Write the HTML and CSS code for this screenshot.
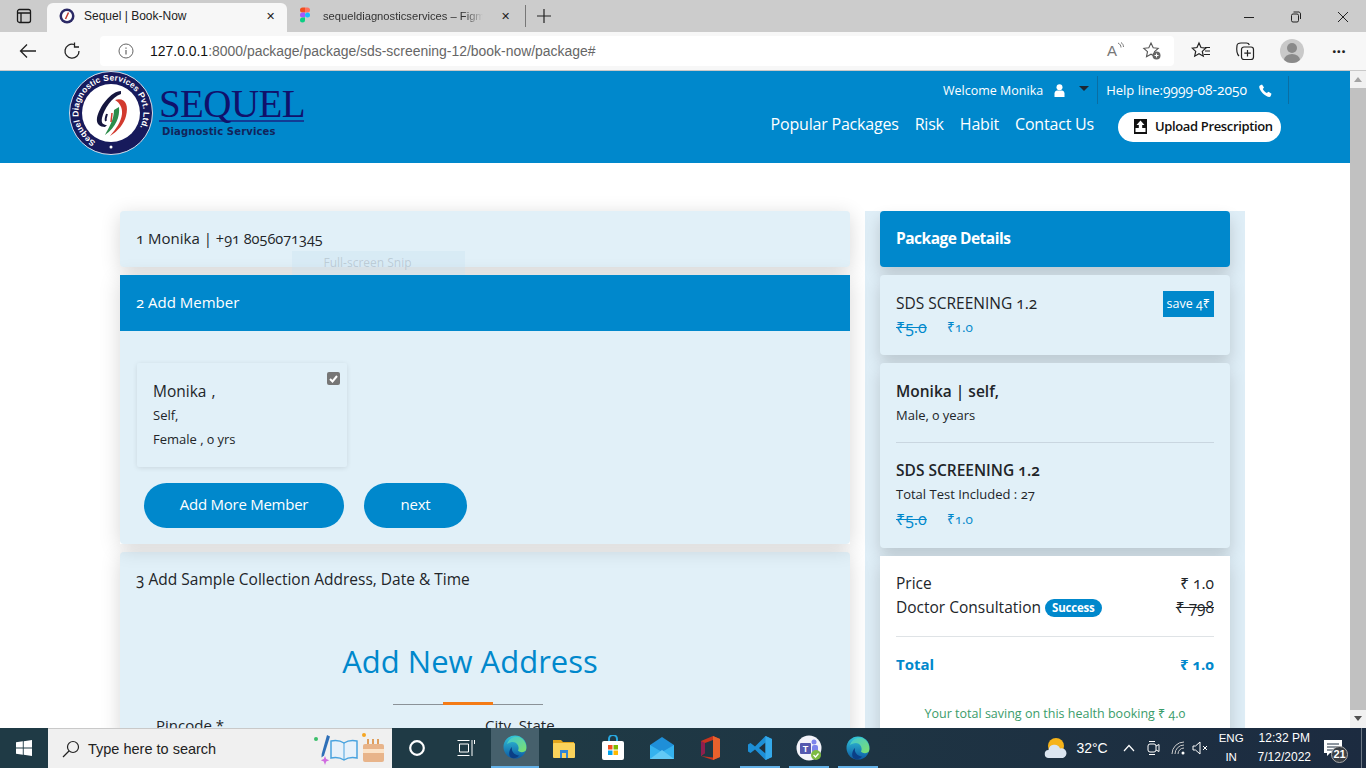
FILE: index.html
```html
<!DOCTYPE html>
<html lang="en">
<head>
    <meta charset="UTF-8">
    <meta name="viewport" content="width=device-width, initial-scale=1.0">
    <title>Sequel | Book-Now</title>
    <link rel="stylesheet" href="styles.css">
</head>
<body>

<!-- Browser tabs -->
<div class="tabbar">
    <svg class="tab-panel-icon" width="16" height="16" viewBox="0 0 16 16" fill="none" stroke="#1a1a1a" stroke-width="1.3"><rect x="1.5" y="1.5" width="13" height="13" rx="2"/><path d="M1.5 5h13M5 5v9.5" /></svg>
    <div class="tab tab-active">
        <svg width="16" height="16" viewBox="0 0 16 16"><circle cx="8" cy="8" r="7.5" fill="#2c2a66"/><circle cx="8" cy="8" r="5" fill="#fff"/><path d="M9.5 4.5 6.5 11" stroke="#c0392b" stroke-width="1.5"/></svg>
        <span class="tab-title">Sequel | Book-Now</span>
        <span class="tab-close">✕</span>
    </div>
    <div class="tab">
        <svg width="12" height="18" viewBox="0 0 12 18"><path d="M1 3a2.5 2.5 0 0 1 2.5-2.5H6v5H3.500A2.500 2.500 0 0 1 1 3z" fill="#f24e1e"/><path d="M6 .5h2.500a2.500 2.500 0 0 1 0 5H6z" fill="#ff7262"/><path d="M1 8a2.500 2.500 0 0 1 2.500-2.500H6v5H3.500A2.500 2.500 0 0 1 1 8z" fill="#a259ff"/><circle cx="8.500" cy="8" r="2.500" fill="#1abcfe"/><path d="M1 13a2.500 2.500 0 0 1 2.500-2.500H6V13a2.500 2.500 0 0 1-5 0z" fill="#0acf83"/></svg>
        <span class="tab-title tab-fade">sequeldiagnosticservices – Figma</span>
        <span class="tab-close">✕</span>
    </div>
    <span class="tab-sep"></span>
    <svg class="tab-plus" width="16" height="16" viewBox="0 0 16 16" stroke="#222" stroke-width="1.2"><path d="M8 1v14M1 8h14"/></svg>
    <div class="win-controls">
        <svg width="12" height="12" viewBox="0 0 12 12" stroke="#222"><path d="M1 6.500h10"/></svg>
        <svg width="12" height="12" viewBox="0 0 12 12" stroke="#222" fill="none"><rect x="1.500" y="3" width="7" height="8" rx="1.500"/><path d="M3.500 1h4.500A2 2 0 0 1 10.500 3v5"/></svg>
        <svg width="12" height="12" viewBox="0 0 12 12" stroke="#222"><path d="M1 1l10 10M11 1 1 11"/></svg>
    </div>
</div>

<!-- Browser toolbar -->
<div class="toolbar">
    <svg class="tool-back" width="18" height="16" viewBox="0 0 18 16" fill="none" stroke="#222" stroke-width="1.3"><path d="M17 8H1.500M8 1.500 1.500 8 8 14.500"/></svg>
    <svg class="tool-reload" width="18" height="18" viewBox="0 0 18 18" fill="none" stroke="#222" stroke-width="1.3"><path d="M11 2.500A7 7 0 1 0 16 9"/><path d="M11.500 .5v4.500H16"/></svg>
    <div class="addressbar">
        <svg width="16" height="16" viewBox="0 0 16 16" fill="none" stroke="#666"><circle cx="8" cy="8" r="7"/><path d="M8 7v4.500M8 4.500v1.200" stroke-width="1.200"/></svg>
        <span class="url"><b>127.0.0.1</b>:8000/package/package/sds-screening-12/book-now/package#</span>
        <span class="read-aloud">A<svg width="7" height="10" viewBox="0 0 7 10" fill="none" stroke="#777"><path d="M1 1c2 1 3 2.500 3 4.500M4 .5c1.500 1 2.500 2.500 2.500 4.500"/></svg></span>
        <svg class="fav-add" width="20" height="20" viewBox="0 0 20 20" fill="none" stroke="#555" stroke-width="1.100"><path d="M9 2l2.200 4.700 5 .6-3.700 3.400 1 5L9 13.200l-4.500 2.500 1-5L1.800 7.300l5-.6z"/><circle cx="14.500" cy="14.500" r="4" fill="#666" stroke="none"/><path d="M14.500 12.500v4M12.500 14.500h4" stroke="#fff"/></svg>
    </div>
    <svg class="tool-icon tool-favs" width="20" height="20" viewBox="0 0 20 20" fill="none" stroke="#222" stroke-width="1.200"><path d="M8 2l2 4.500 4.800.6-3.500 3.300 1 4.800L8 12.800l-4.300 2.400 1-4.800L1.200 7.100 6 6.500zM14 6.500h5M14 10h5M13 13.500h6"/></svg>
    <svg class="tool-icon tool-coll" width="20" height="20" viewBox="0 0 20 20" fill="none" stroke="#222" stroke-width="1.200"><path d="M4 15C2 13 1.500 8 2 4.500 2.300 2.500 4 2 6 2h5.500c1.500 0 2.500.7 2.800 2"/><rect x="6.500" y="6" width="12" height="12.500" rx="2.500"/><path d="M12.500 9v6.500M9.300 12.200h6.500"/></svg>
    <span class="avatar"><svg width="22" height="24" viewBox="0 0 22 24" fill="#8a8a8a"><circle cx="11" cy="9" r="5"/><ellipse cx="11" cy="21" rx="8" ry="6"/></svg></span>
    <span class="tool-dots">···</span>
</div>

<div class="viewport">
    <div class="site">

        <header class="site-header">
            <div class="logo">
                <svg width="84" height="84" viewBox="0 0 84 84">
                    <circle cx="42" cy="42" r="41.500" fill="#171a5c" stroke="#d6dbe8"/>
                    <circle cx="42" cy="42" r="29" fill="#fff"/>
                    <defs><path id="logo-ring" d="M42 42m-32.500 0a32.500 32.500 0 1 1 65 0a32.500 32.500 0 1 1-65 0"/></defs>
                    <text class="logo-ring-text" transform="rotate(-62 42 42)"><textPath href="#logo-ring" textLength="152" lengthAdjust="spacing">Sequel Diagnostic Services Pvt. Ltd.</textPath></text>
                    <circle cx="42" cy="76" r="1.500" fill="#fff"/>
                    <path d="M52 20C42 20 30 36 28 47c-1 6 3 9 8 9l2-2c-4 0-6-2-5-7 2-9 10-21 19-24z" fill="#15163e"/>
                    <path d="M38 43c-1 3-2 5-1 7" fill="none" stroke="#15163e" stroke-width="2"/>
                    <path d="M46 29c10-3 14 5 11 16-2 8-8 15-16 20 6-7 11-14 12-22 .7-6-2-11-7-14z" fill="#d23a2e"/>
                    <path d="M50 36c1 10-3 20-14 28 4-8 9-15 9-25z" fill="#2c8c4a"/>
                    <path d="M43 42l-1 9" stroke="#d23a2e" stroke-width="1.500"/>
                </svg>
                <div class="logo-text">
                    <div class="logo-name">SEQUEL</div>
                    <div class="logo-sub">Diagnostic Services</div>
                </div>
            </div>
            <div class="header-right">
                <div class="header-top">
                    <span class="welcome">Welcome Monika</span>
                    <svg width="11" height="13" viewBox="0 0 11 13" fill="#fff"><circle cx="5.500" cy="3.200" r="3"/><path d="M.5 13V9.500C.5 7.500 2 6.500 3 6.500h5c1 0 2.500 1 2.500 3V13z"/></svg>
                    <span class="caret"></span>
                    <span class="help">Help line:<span class="help-num">9999-08-2050</span></span>
                    <svg width="13" height="13" viewBox="0 0 13 13" fill="#fff"><path d="M3 .5 5 3.500 3.800 5c.8 1.800 2.200 3.200 4 4L9.500 7.800l3 2-.9 2.400c-.3.500-1 .8-1.600.7C5.500 12 1 7.500.2 3c-.1-.6.200-1.300.7-1.600z"/></svg>
                </div>
                <nav class="header-nav">
                    <a>Popular Packages</a>
                    <a>Risk</a>
                    <a>Habit</a>
                    <a>Contact Us</a>
                    <button class="upload-btn">
                        <svg width="13" height="15" viewBox="0 0 13 15"><rect width="13" height="15" fill="#111"/><rect x="1.500" y="9" width="10" height="4" fill="#fff"/><path d="M6.500 1.500 10.500 6H8.200v5H4.800V6H2.500z" fill="#fff"/></svg>
                        <span>Upload Prescription</span>
                    </button>
                </nav>
            </div>
        </header>

        <main class="booking">
            <section class="steps">
                <div class="step-card step-closed">
                    <span class="num">1</span> Monika | <span class="num phone">+91 8056071345</span>
                </div>
                <div class="step-open">
                    <div class="step-head"><span class="num">2</span> Add Member</div>
                    <div class="step-body">
                        <div class="member-card">
                            <span class="member-check"><svg width="9" height="8" viewBox="0 0 9 8" fill="none" stroke="#fff" stroke-width="2"><path d="M1 4l2.500 2.500L8 1"/></svg></span>
                            <div class="member-name">Monika ,</div>
                            <div class="member-line">Self,</div>
                            <div class="member-line">Female , <span class="num">0</span> yrs</div>
                        </div>
                        <div class="member-actions">
                            <button class="pill pill-wide">Add More Member</button>
                            <button class="pill pill-next">next</button>
                        </div>
                    </div>
                </div>
                <div class="step-address">
                    <div class="address-title"><span class="num">3</span> Add Sample Collection Address, Date &amp; Time</div>
                    <h2 class="address-heading">Add New Address</h2>
                    <div class="heading-rule"><span></span></div>
                    <div class="address-fields">
                        <label>Pincode *</label>
                        <label>City, State</label>
                    </div>
                </div>
                <div class="snip-ghost">Full-screen Snip</div>
            </section>

            <aside class="summary">
                <div class="summary-head">Package Details</div>
                <div class="summary-card package-card">
                    <div>
                        <div class="package-name">SDS SCREENING <span class="num">1.2</span></div>
                        <div class="prices"><s class="num">₹5.0</s><span class="num">₹1.0</span></div>
                    </div>
                    <span class="save-tag">save <span class="num">4₹</span></span>
                </div>
                <div class="summary-card person-card">
                    <div class="person-name">Monika | self,</div>
                    <div class="person-line">Male, <span class="num">0</span> years</div>
                    <hr class="rule">
                    <div class="person-name">SDS SCREENING <span class="num">1.2</span></div>
                    <div class="person-line">Total Test Included : <span class="num">27</span></div>
                    <div class="prices prices-b"><s class="num">₹5.0</s><span class="num">₹1.0</span></div>
                </div>
                <div class="bill-card">
                    <div class="bill-row"><span>Price</span><span class="num">₹ 1.0</span></div>
                    <div class="bill-row"><span>Doctor Consultation <em class="badge">Success</em></span><s class="num">₹ 798</s></div>
                    <hr class="bill-rule">
                    <div class="bill-row bill-total"><span>Total</span><span class="num">₹ 1.0</span></div>
                    <p class="bill-saving">Your total saving on this health booking ₹ <span class="num">4.0</span></p>
                </div>
            </aside>
        </main>
    </div>

    <div class="scrollbar">
        <span class="arrow-up"></span>
        <span class="thumb"></span>
        <span class="arrow-down"></span>
    </div>
</div>

<!-- Windows taskbar -->
<footer class="taskbar">
    <div class="task-start">
        <svg width="16" height="16" viewBox="0 0 16 16" fill="#fff"><path d="M0 2.300 6.800 1.300v6.300H0zM7.700 1.200 16 0v7.600H7.700zM0 8.400h6.800v6.300L0 13.700zM7.700 8.400H16V16L7.700 14.800z"/></svg>
    </div>
    <div class="task-search">
        <svg width="18" height="18" viewBox="0 0 18 18" fill="none" stroke="#222" stroke-width="1.200"><circle cx="11" cy="7" r="5.500"/><path d="M7 11 1 17"/></svg>
        <span>Type here to search</span>
        <svg class="search-art" width="76" height="34" viewBox="0 0 76 34">
            <circle cx="3" cy="7" r="2" fill="#3bbf6a"/>
            <path d="M14 3l3 1.500-6 19-2.500 2 .2-3.500z" fill="#2e6fb7"/>
            <path d="M12 24l1.200 3 3 1.200-3 1.200-1.200 3.600-1.200-3.600-3-1.200 3-1.200z" fill="#d06be0"/>
            <path d="M18 9c5-1 10 0 13 2 3-2 8-3 13-2v17c-5-1-10 0-13 2-3-2-8-3-13-2z" fill="#e8f1fa" stroke="#4aa3df" stroke-width="1.500"/>
            <path d="M31 11v17" stroke="#4aa3df"/>
            <circle cx="51" cy="3" r="2" fill="#f5a623"/>
            <rect x="50" y="12" width="21" height="18" rx="2" fill="#e8b48a"/>
            <rect x="50" y="17" width="21" height="4" fill="#fbe3c8"/>
            <path d="M55 12V7M60 12V7M65 12V7" stroke="#d9822b" stroke-width="1.500"/>
        </svg>
    </div>
    <div class="task-icons">
        <span class="task-item"><svg width="18" height="18" viewBox="0 0 18 18" fill="none" stroke="#fff" stroke-width="2.200"><circle cx="9" cy="9" r="6.800"/></svg></span>
        <span class="task-item"><svg width="18" height="18" viewBox="0 0 18 18" fill="none" stroke="#fff"><path d="M.5 1.500h12M.5 16.500h12M2.500 5h9v8h-9zM15 1v16M17.500 1v4"/></svg></span>
        <span class="task-item task-current"><svg width="24" height="24" viewBox="0 0 24 24"><use href="#edge-mark"/></svg></span>
        <span class="task-item"><svg width="22" height="20" viewBox="0 0 22 20"><path d="M0 2h8l2 2h11v3H0z" fill="#e3a51c"/><rect y="5" width="22" height="15" rx="1" fill="#fbd35b"/><rect x="7" y="12" width="8" height="8" fill="#2f86d6"/><rect x="9" y="15" width="4" height="5" fill="#fbd35b"/></svg></span>
        <span class="task-item"><svg width="24" height="26" viewBox="0 0 24 26"><path d="M8 7V4a4 4 0 0 1 8 0v3" fill="none" stroke="#28a8e0" stroke-width="2"/><rect x="1" y="6" width="22" height="19" rx="2" fill="#fff"/><rect x="7" y="10" width="4.500" height="4.500" fill="#f25022"/><rect x="12.500" y="10" width="4.500" height="4.500" fill="#7fba00"/><rect x="7" y="15.500" width="4.500" height="4.500" fill="#00a4ef"/><rect x="12.500" y="15.500" width="4.500" height="4.500" fill="#ffb900"/></svg></span>
        <span class="task-item"><svg width="24" height="22" viewBox="0 0 24 22"><path d="M12 0 24 8v14H0V8z" fill="#1f8fd8"/><path d="M0 8l12 7L24 8v14H0z" fill="#35b2ee"/><path d="M0 22l12-9 12 9z" fill="#62c9f5"/></svg></span>
        <span class="task-item"><svg width="20" height="24" viewBox="0 0 20 24"><path d="M0 5 12 0l7 3v18l-7 3-12-4 12 1.500V4L4 7v10l-4 3z" fill="#c8341e"/><path d="M12 0l7 3v18l-7 3z" fill="#e8612c"/><path d="M0 5 4 7v10l-4 3z" fill="#8e1f4e"/></svg></span>
        <span class="task-item task-open"><svg width="24" height="24" viewBox="0 0 24 24"><path d="M17.500 0 24 3v18l-6.500 3L7 13.500 2.500 17 0 15.500V8.500L2.500 7 7 10.500z" fill="#1d8fd6"/><path d="M17.500 6.500 11 12l6.500 5.500z" fill="#1f2f3b"/><path d="M17.500 0 24 3v18l-6.500 3z" fill="#34a9ea"/></svg></span>
        <span class="task-item task-open"><svg width="26" height="26" viewBox="0 0 26 26"><circle cx="13" cy="13" r="12.500" fill="#f3f3fa"/><rect x="4" y="8" width="11" height="11" rx="1" fill="#5558af"/><text class="teams-t" x="9.500" y="16.500">T</text><circle cx="18" cy="7" r="2.500" fill="#7b83eb"/><rect x="16" y="10" width="6" height="8" rx="2" fill="#7b83eb"/><circle cx="20" cy="20" r="5" fill="#7dbb42"/><path d="M17.500 20l2 2 3-3.500" fill="none" stroke="#fff" stroke-width="1.300"/></svg></span>
        <span class="task-item task-open"><svg width="24" height="24" viewBox="0 0 24 24"><use href="#edge-mark"/></svg></span>
    </div>
    <div class="task-tray">
        <svg class="tray-weather" width="24" height="24" viewBox="0 0 24 24"><circle cx="12" cy="10" r="8" fill="#f6b319"/><path d="M5 22a4 4 0 0 1-.5-8A6 6 0 0 1 16 12.500a4.800 4.800 0 0 1 3 9.500z" fill="#dbe5f0"/></svg>
        <span class="tray-temp">32°C</span>
        <svg class="tray-up" width="12" height="8" viewBox="0 0 12 8" fill="none" stroke="#fff" stroke-width="1.200"><path d="M1 7l5-5.500L11 7"/></svg>
        <svg class="tray-meet" width="13" height="16" viewBox="0 0 13 16" fill="none" stroke="#fff"><rect x="1" y="4" width="8" height="8" rx="2"/><path d="M9 6l3-1.500v7L9 10M2 1.500h6M2 14.500h6"/></svg>
        <svg class="tray-wifi" width="16" height="14" viewBox="0 0 16 14" fill="none" stroke="#ccc"><path d="M1 13A12 12 0 0 1 13 1M4 13a9 9 0 0 1 9-9M7 13a6 6 0 0 1 6-6"/><circle cx="12" cy="12" r="1.500" fill="#fff" stroke="none"/></svg>
        <svg class="tray-sound" width="17" height="14" viewBox="0 0 17 14" fill="none" stroke="#fff"><path d="M1 5h2.500L8 1v12L3.500 9H1zM11 5l4 4M15 5l-4 4"/></svg>
        <div class="tray-lang"><span>ENG</span><span>IN</span></div>
        <div class="tray-clock"><span>12:32 PM</span><span>7/12/2022</span></div>
        <div class="tray-notify">
            <svg width="18" height="16" viewBox="0 0 18 16" fill="#fff"><path d="M0 0h18v13H6l-3 3v-3H0z"/><path d="M3 4h12M3 7h12M3 10h8" stroke="#1d2c3e"/></svg>
            <span class="notify-count">21</span>
        </div>
    </div>
</footer>

<svg class="svg-defs" width="0" height="0">
    <defs>
        <linearGradient id="edge-blue" x1="0" y1="0" x2="0" y2="1"><stop offset="0" stop-color="#33c6d8"/><stop offset="1" stop-color="#0c59a4"/></linearGradient>
        <linearGradient id="edge-green" x1="0" y1="0" x2="1" y2="1"><stop offset="0" stop-color="#3fc7d8"/><stop offset="1" stop-color="#7ee06b"/></linearGradient>
        <g id="edge-mark">
            <circle cx="12" cy="12" r="11.500" fill="url(#edge-blue)"/>
            <path d="M4 9C6 2 14-.5 19.500 4c3.500 3 4.500 8 3.500 11-1 2.500-6 3-8 .5C17 12 14 7 10 7 7.500 7 5.500 8 4 9z" fill="url(#edge-green)"/>
            <path d="M9 12c-1 4 2 8 7 8.500-2 2.500-5.500 3.500-8 2 -3-2-2-8 1-10.500z" fill="#0b3f86"/>
        </g>
    </defs>
</svg>

</body>
</html>
```

FILE: styles.css
```css
* {
    box-sizing: border-box;
}
html, body {
    margin: 0;
    height: 768px;
    overflow: hidden;
}
body {
    display: flex;
    flex-direction: column;
    font-family: "Open Sans", "Noto Sans", sans-serif;
    color: #212529;
    background-color: #fff;
}
.svg-defs {
    position: absolute;
}
button {
    font-family: inherit;
    border: none;
    cursor: pointer;
}
.num {
    font-variant-numeric: oldstyle-nums;
}

/* Browser tabs */
.tabbar {
    height: 32px;
    flex: none;
    display: flex;
    align-items: flex-end;
    background-color: #cccccc;
    font-family: "Liberation Sans", sans-serif;
    font-size: 12px;
    color: #222;
}
.tab-panel-icon {
    margin: 0 15px 8px 16px;
}
.tab {
    width: 240px;
    height: 29px;
    padding: 0 7px 3px 12px;
    display: flex;
    align-items: center;
    gap: 9px;
}
.tab-active {
    background-color: #f7f7f7;
    border-radius: 6px 6px 0 0;
}
.tab + .tab {
    width: 238px;
    gap: 12px;
    padding: 0 10px 3px 12px;
}
.tab-title {
    flex: 1;
    white-space: nowrap;
    overflow: hidden;
}
.tab-fade {
    color: #333;
    font-size: 11.200px;
    -webkit-mask-image: linear-gradient(90deg, #000 88%, transparent 100%);
    mask-image: linear-gradient(90deg, #000 88%, transparent 100%);
}
.tab-close {
    font-size: 11px;
    width: 20px;
    text-align: center;
}
.tab-sep {
    width: 1px;
    height: 22px;
    background-color: #777;
    margin: 0 10px 5px 0;
}
.tab-plus {
    margin-bottom: 8px;
}
.win-controls {
    margin-left: auto;
    display: flex;
    gap: 35px;
    padding-right: 17px;
    margin-bottom: 9px;
}

/* Browser toolbar */
.toolbar {
    height: 39px;
    flex: none;
    display: flex;
    align-items: center;
    background-color: #f7f7f7;
    border-bottom: 1px solid #c9c9c9;
    padding-bottom: 1px;
}
.tool-back {
    margin-left: 19px;
}
.tool-reload {
    margin-left: 26px;
}
.addressbar {
    width: 1074px;
    height: 30px;
    margin-left: 19px;
    padding: 0 12px 0 18px;
    background-color: #fff;
    border-radius: 4px;
    display: flex;
    align-items: center;
}
.url {
    margin-left: 16px;
    padding-top: 1px;
    font-family: "Liberation Sans", sans-serif;
    font-size: 13.950px;
    color: #666;
    flex: 1;
}
.url b {
    font-weight: normal;
    color: #111;
}
.read-aloud {
    font-family: "Liberation Sans", sans-serif;
    font-size: 15px;
    color: #777;
    display: flex;
    margin-right: 18px;
}
.tool-favs {
    margin-left: 17px;
}
.tool-coll {
    margin-left: 24px;
}
.avatar {
    width: 24px;
    height: 24px;
    margin-left: 25px;
    border-radius: 50%;
    background-color: #c9c9c9;
    display: flex;
    justify-content: center;
    overflow: hidden;
}
.tool-dots {
    margin-left: 28px;
    font-size: 16px;
    font-weight: bold;
    color: #222;
}

/* Page area */
.viewport {
    flex: none;
    height: 657px;
    display: flex;
}
.site {
    width: 1350px;
    overflow: hidden;
}
.scrollbar {
    width: 16px;
    background-color: #f1f1f1;
    display: flex;
    flex-direction: column;
    align-items: center;
}
.thumb {
    width: 16px;
    height: 622px;
    background-color: #c1c1c1;
}
.arrow-up, .arrow-down {
    width: 0;
    height: 0;
    border-left: 4px solid transparent;
    border-right: 4px solid transparent;
}
.arrow-up {
    border-bottom: 5px solid #a3a3a3;
    margin: 6px 0 6px;
}
.arrow-down {
    border-top: 5px solid #505050;
    margin-top: 6px;
}

/* Site header */
.site-header {
    height: 92px;
    padding: 0 69px 0 69px;
    background-color: #0088cc;
    display: flex;
    justify-content: space-between;
}
.logo {
    display: flex;
}
.logo-ring-text {
    font-family: "Liberation Sans", sans-serif;
    font-size: 8.500px;
    font-weight: bold;
    fill: #fff;
}
.logo-text {
    margin-left: 6px;
    padding-top: 17px;
}
.logo-name {
    font-family: "Liberation Serif", serif;
    font-size: 39px;
    line-height: 32px;
    color: #10116b;
    border-bottom: 2px solid #123c95;
    width: 145px;
    letter-spacing: -.6px;
    white-space: nowrap;
}
.logo-sub {
    font-family: "DejaVu Sans", sans-serif;
    font-size: 10px;
    font-weight: bold;
    line-height: 14px;
    color: #12245a;
    white-space: nowrap;
    padding: 3px 0 0 3px;
    letter-spacing: .15px;
}
.header-right {
    display: flex;
    flex-direction: column;
    align-items: flex-end;
}
.header-top {
    height: 28px;
    margin: 5px -8px 0 0;
    display: flex;
    align-items: center;
    color: #fff;
    font-size: 12.500px;
    border-right: 1px solid #0a6ea3;
    padding-right: 16px;
}
.welcome {
    margin-right: 11px;
}
.caret {
    width: 0;
    height: 0;
    margin: 0 8px 4px 14px;
    border-left: 5px solid transparent;
    border-right: 5px solid transparent;
    border-top: 5px solid #1c2733;
}
.help {
    height: 28px;
    line-height: 28px;
    padding-left: 8px;
    margin-right: 12px;
    border-left: 1px solid #0a6ea3;
    font-size: 13px;
}
.help-num {
    font-size: 13.800px;
    font-variant-numeric: oldstyle-nums;
}
.header-nav {
    margin-top: 8px;
    display: flex;
    align-items: center;
    gap: 16px;
    color: #fff;
    font-size: 16px;
    letter-spacing: -.2px;
}
.header-nav a {
    margin-bottom: 6px;
}
.upload-btn {
    width: 163px;
    height: 30px;
    margin-left: 8px;
    padding: 0 0 2px 16px;
    border-radius: 15px;
    background-color: #fff;
    color: #111;
    font-size: 13px;
    font-weight: 600;
    letter-spacing: -.36px;
    display: flex;
    align-items: center;
    gap: 8px;
    white-space: nowrap;
}

/* Booking layout */
.booking {
    padding: 48px 0 0 120px;
    display: grid;
    grid-template-columns: 730px 380px;
    column-gap: 15px;
}
.steps {
    position: relative;
}
.step-card {
    height: 56px;
    padding: 0 16px;
    font-size: 15px;
    line-height: 54px;
    background-color: #e1f0f8;
    border-radius: 4px;
    box-shadow: 0 4px 20px rgba(0,0,0,.16);
}
.phone {
    font-size: 14.500px;
}
.step-open {
    margin-top: 8px;
    box-shadow: 0 4px 20px rgba(0,0,0,.16);
    position: relative;
}
.step-head {
    height: 56px;
    padding: 0 16px;
    background-color: #0088cc;
    color: #fff;
    font-size: 15px;
    line-height: 54px;
}
.step-body {
    height: 213px;
    padding: 32px 0 0 17px;
    background-color: #e1f0f8;
    border-radius: 0 0 4px 4px;
}
.member-card {
    position: relative;
    width: 210px;
    height: 104px;
    padding: 16px 16px 0;
    background-color: #e1f0f8;
    border-radius: 2px;
    box-shadow: 0 1px 5px rgba(0,0,0,.1);
}
.member-check {
    position: absolute;
    top: 9px;
    right: 7px;
    width: 13px;
    height: 13px;
    border-radius: 2px;
    background-color: #767676;
    display: flex;
    align-items: center;
    justify-content: center;
}
.member-name {
    font-size: 15.500px;
    line-height: 24px;
    word-spacing: 1px;
}
.member-line {
    font-size: 13px;
    line-height: 24px;
}
.member-actions {
    margin: 16px 0 0 7px;
    display: flex;
    gap: 20px;
}
.pill {
    height: 45px;
    padding: 0 0 3px;
    border-radius: 23px;
    background-color: #0088cc;
    color: #fff;
    font-size: 15px;
    letter-spacing: -.25px;
}
.pill-wide {
    width: 200px;
}
.pill-next {
    width: 103px;
}
.step-address {
    margin-top: 8px;
    height: 190px;
    padding-top: 17px;
    background-color: #e1f0f8;
    border-radius: 4px;
    box-shadow: 0 4px 20px rgba(0,0,0,.16);
}
.address-title {
    padding-left: 16px;
    font-size: 15.500px;
    line-height: 21px;
}
.address-heading {
    margin: 51px 30px 0 0;
    text-align: center;
    font-size: 31px;
    font-weight: normal;
    line-height: 40px;
    color: #0088cc;
}
.heading-rule {
    width: 150px;
    height: 1px;
    margin: 23px 0 0 273px;
    background-color: #8b9298;
    position: relative;
}
.heading-rule span {
    position: absolute;
    left: 50px;
    top: -2px;
    width: 50px;
    height: 3px;
    background-color: #f47b16;
}
.address-fields {
    display: grid;
    grid-template-columns: 329px 200px;
    margin: 10px 0 0 36px;
    font-size: 15px;
    line-height: 20px;
}
.snip-ghost {
    position: absolute;
    left: 172px;
    top: 40px;
    width: 173px;
    height: 24px;
    padding-right: 22px;
    background-color: rgba(200,225,240,.35);
    color: rgba(120,130,140,.3);
    font-size: 12px;
    line-height: 24px;
    text-align: center;
}

/* Package summary */
.summary {
    padding: 0 15px;
    background-color: #dfeef7;
}
.summary-head {
    height: 56px;
    padding: 0 16px;
    background-color: #0088cc;
    color: #fff;
    font-size: 15.500px;
    font-weight: bold;
    letter-spacing: -.5px;
    line-height: 55px;
    border-radius: 4px;
    box-shadow: 0 8px 16px rgba(0,0,0,.16);
}
.summary-card {
    margin-top: 8px;
    padding: 16px;
    background-color: #e1f0f8;
    border-radius: 4px;
    box-shadow: 0 8px 16px rgba(0,0,0,.16);
}
.package-card {
    height: 80px;
    display: flex;
    justify-content: space-between;
}
.package-name {
    font-size: 15.500px;
    line-height: 24px;
}
.prices {
    display: flex;
    gap: 17px;
    color: #0088cc;
    font-size: 13.500px;
    line-height: 24px;
}
.prices s {
    width: 34px;
    font-size: 16px;
}
.save-tag {
    align-self: flex-start;
    height: 26px;
    padding: 0 4px;
    background-color: #0088cc;
    color: #fff;
    font-size: 12.500px;
    line-height: 25px;
}
.person-card {
    height: 185px;
}
.person-name {
    font-size: 15.500px;
    font-weight: 600;
    line-height: 24px;
}
.person-line {
    font-size: 13px;
    line-height: 25px;
}
.rule {
    margin: 14px 0 15px;
    border: none;
    border-top: 1px solid #c9d6e0;
}
.bill-card {
    margin-top: 8px;
    height: 190px;
    padding: 15px 16px;
    background-color: #fff;
    box-shadow: 0 8px 16px rgba(0,0,0,.16);
}
.bill-row {
    display: flex;
    justify-content: space-between;
    font-size: 15.500px;
    line-height: 24px;
}
.badge {
    display: inline-block;
    height: 18px;
    padding: 0 7px;
    border-radius: 9px;
    background-color: #0088cc;
    color: #fff;
    font-size: 11.500px;
    font-style: normal;
    font-weight: bold;
    letter-spacing: -.2px;
    line-height: 18px;
    vertical-align: 1px;
}
.bill-rule {
    margin: 17px 0 15px;
    border: none;
    border-top: 1px solid #dfe3e6;
}
.bill-total {
    font-size: 15px;
    font-weight: bold;
    color: #0088cc;
}
.bill-saving {
    margin: 26px 0 0;
    text-align: center;
    font-size: 12.500px;
    line-height: 24px;
    color: #3a9c6a;
    white-space: nowrap;
}

/* Windows taskbar */
.taskbar {
    height: 40px;
    flex: none;
    display: flex;
    align-items: stretch;
    background: linear-gradient(90deg, #1f3a45 0%, #1f3a45 40%, #1c2b40 100%);
    color: #fff;
    font-family: "Liberation Sans", sans-serif;
    font-size: 13px;
}
.task-start {
    width: 48px;
    display: flex;
    align-items: center;
    justify-content: center;
}
.task-search {
    width: 344px;
    padding-left: 14px;
    display: flex;
    align-items: center;
    background-color: #f0f0f0;
    border-top: 1px solid #c9c9c9;
    color: #222;
    font-size: 14.500px;
}
.task-search span {
    margin-left: 8px;
    flex: 1;
}
.search-art {
    margin-right: 3px;
}
.task-icons {
    display: flex;
}
.task-item {
    width: 48px;
    margin-left: 1px;
    display: flex;
    align-items: center;
    justify-content: center;
}
.task-current {
    background-color: #46606c;
    border-bottom: 2px solid #63b1e8;
}
.task-open {
    position: relative;
}
.task-open::after {
    content: "";
    position: absolute;
    bottom: 0;
    left: 4px;
    right: 4px;
    height: 2px;
    background-color: #63b1e8;
}
.teams-t {
    font-family: "Liberation Sans", sans-serif;
    font-size: 9px;
    font-weight: bold;
    fill: #fff;
    text-anchor: middle;
}
.task-tray {
    margin-left: auto;
    display: flex;
    align-items: center;
    border-right: 1px solid #6d7885;
    margin-right: 4px;
}
.tray-temp {
    margin: 0 0 0 8px;
    font-size: 14px;
}
.tray-up {
    margin-left: 15px;
}
.tray-meet {
    margin-left: 12px;
}
.tray-wifi {
    margin-left: 11px;
}
.tray-sound {
    margin-left: 5px;
}
.tray-lang, .tray-clock {
    display: flex;
    flex-direction: column;
    align-items: center;
    line-height: 19px;
    font-size: 12px;
}
.tray-lang {
    margin-left: 10px;
    font-size: 11.500px;
}
.tray-clock {
    margin-left: 14px;
}
.tray-notify {
    position: relative;
    margin: 0 19px 0 13px;
    display: flex;
}
.notify-count {
    position: absolute;
    left: 7px;
    top: 6px;
    width: 17px;
    height: 17px;
    border-radius: 50%;
    background-color: #3a3f45;
    border: 1px solid #aaa;
    font-size: 11px;
    font-weight: bold;
    line-height: 15px;
    text-align: center;
}
```
